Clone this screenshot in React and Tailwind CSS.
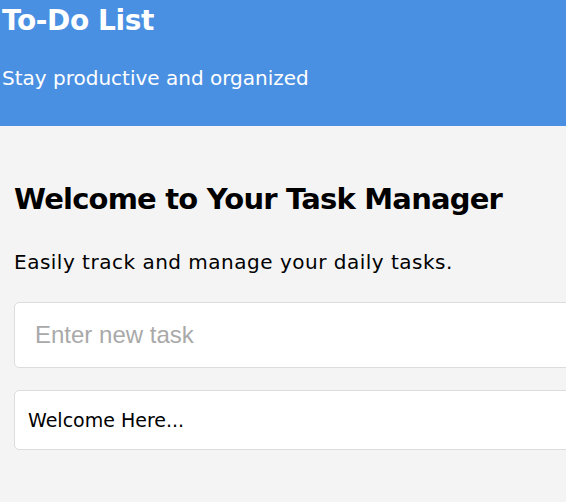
export default function App() {
  return (
    <div className="w-[566px] h-[502px] overflow-hidden bg-[#f4f4f4] font-['DejaVu_Sans',sans-serif]">
      <div className="w-[640px]">
        <header className="bg-[#4a90e2] text-white h-[126px] px-[2px] pt-[3px]">
          <h1 className="text-[28px] font-bold leading-[36px] tracking-[-0.4px]">To-Do List</h1>
          <p className="mt-[25px] text-[20px] leading-[28px]">Stay productive and organized</p>
        </header>
        <main className="px-[14px] pt-[55px]">
          <h2 className="text-[29px] font-bold leading-[36px] text-black tracking-[-0.8px]">
            Welcome to Your Task Manager
          </h2>
          <p className="mt-[31px] text-[20px] leading-[28px] text-black tracking-[0.5px]">
            Easily track and manage your daily tasks.
          </p>
          <input
            type="text"
            placeholder="Enter new task"
            className="mt-[26px] block w-full h-[66px] px-[20px] bg-white border border-[#dddddd] rounded-[5px] text-[24px] font-['Liberation_Sans',sans-serif] placeholder:text-[#a9a9a9] outline-none"
          />
          <div className="mt-[22px] h-[60px] flex items-center px-[13px] bg-white border border-[#dddddd] rounded-[5px] text-[19px] text-black">
            Welcome Here...
          </div>
        </main>
      </div>
    </div>
  )
}
